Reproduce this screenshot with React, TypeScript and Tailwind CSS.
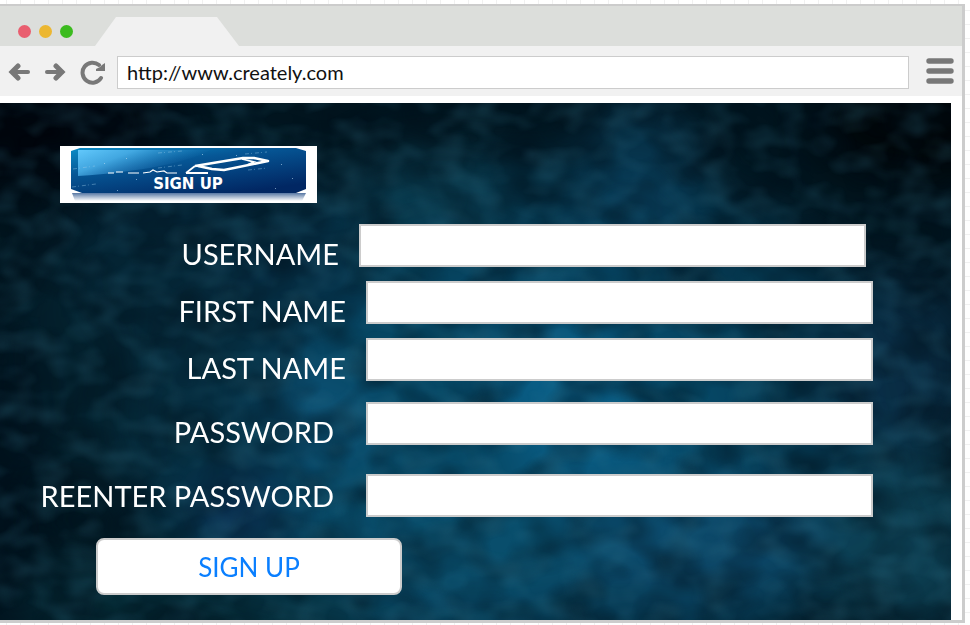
import React from "react";

type Field = {
  id: string;
  label: string;
  type: string;
  row: string;
  labelClass: string;
};

const fields: Field[] = [
  { id: "username", label: "USERNAME", type: "text", row: "items-end mr-[85px]", labelClass: "w-[359px] pr-5" },
  { id: "first-name", label: "FIRST NAME", type: "text", row: "items-end mr-[78px] mt-[14px]", labelClass: "w-[366px] pr-5" },
  { id: "last-name", label: "LAST NAME", type: "text", row: "items-end mr-[78px] mt-[14px]", labelClass: "w-[366px] pr-5" },
  { id: "password", label: "PASSWORD", type: "password", row: "items-end mr-[78px] mt-[21px]", labelClass: "w-[366px] pr-8" },
  { id: "reenter", label: "REENTER PASSWORD", type: "password", row: "items-center mr-[78px] mt-[29px]", labelClass: "w-[366px] pr-8" },
];

// x, y, rx, ry, colour, opacity of the soft patches of light on the backdrop
const patches: [number, number, number, number, string, number][] = [
  [520, 320, 400, 260, "#053a52", 0.9],
  [520, 320, 240, 170, "#07506f", 0.7],
  [560, 270, 80, 60, "#0b6a9a", 0.6],
  [590, 345, 80, 45, "#0b6892", 0.6],
  [280, 275, 50, 45, "#0d5579", 0.65],
  [330, 320, 60, 40, "#125a80", 0.5],
  [440, 450, 180, 70, "#0b516f", 0.7],
  [700, 440, 130, 60, "#0f4f72", 0.7],
  [640, 80, 60, 80, "#0a4260", 0.7],
  [430, 100, 80, 50, "#0c4053", 0.7],
  [210, 160, 150, 100, "#05293d", 0.7],
  [900, 440, 80, 90, "#0d4257", 0.9],
  [900, 260, 80, 90, "#0a2d45", 0.8],
  [130, 260, 140, 130, "#052633", 0.6],
  [240, 410, 40, 30, "#14225a", 0.5],
  [180, 500, 200, 50, "#05303c", 0.7],
  [940, 20, 130, 60, "#000305", 0.9],
  [20, 20, 150, 70, "#00030a", 0.9],
  [0, 380, 40, 180, "#01101b", 0.8],
];

function Backdrop() {
  return (
    <svg
      className="absolute inset-0 h-full w-full"
      viewBox="0 0 951 517"
      preserveAspectRatio="none"
      aria-hidden="true"
    >
      <defs>
        <filter id="soft" x="-50%" y="-50%" width="200%" height="200%" colorInterpolationFilters="sRGB">
          <feGaussianBlur stdDeviation="26" />
        </filter>
        <filter id="shade" x="0" y="0" width="100%" height="100%" colorInterpolationFilters="sRGB">
          <feTurbulence type="fractalNoise" baseFrequency="0.02 0.026" numOctaves={2} seed={7} />
          <feColorMatrix values="0 0 0 0 0  0 0 0 0 0.06  0 0 0 0 0.1  2.4 0 0 0 -0.9" />
        </filter>
        <filter id="glow" x="0" y="0" width="100%" height="100%" colorInterpolationFilters="sRGB">
          <feTurbulence type="fractalNoise" baseFrequency="0.03 0.044" numOctaves={2} seed={21} />
          <feColorMatrix values="0 0 0 0 0.2  0 0 0 0 0.46  0 0 0 0 0.55  0 1.8 0 0 -0.72" />
        </filter>
      </defs>
      <rect width="951" height="517" fill="#02151f" />
      <g filter="url(#soft)">
        {patches.map(([x, y, rx, ry, fill, opacity]) => (
          <ellipse key={`${x}-${y}`} cx={x} cy={y} rx={rx} ry={ry} fill={fill} opacity={opacity} />
        ))}
      </g>
      <rect width="951" height="517" filter="url(#shade)" opacity="0.5" />
      <rect width="951" height="517" filter="url(#glow)" opacity="0.32" />
    </svg>
  );
}

function SignUpLogo() {
  return (
    <svg className="block h-[57px] w-[257px]" viewBox="0 0 257 57" role="img" aria-label="Sign up">
      <defs>
        <linearGradient id="plate" x1="0" y1="0" x2="0.7" y2="1">
          <stop offset="0" stopColor="#0a8cc6" />
          <stop offset="0.4" stopColor="#065796" />
          <stop offset="1" stopColor="#012763" />
        </linearGradient>
        <linearGradient id="shine" x1="0" y1="0" x2="1" y2="0.5">
          <stop offset="0" stopColor="#62c8fb" />
          <stop offset="0.35" stopColor="#4cb1ea" stopOpacity="0.85" />
          <stop offset="0.85" stopColor="#2a7fc0" stopOpacity="0" />
        </linearGradient>
        <linearGradient id="mirror" x1="0" y1="0" x2="0" y2="1">
          <stop offset="0" stopColor="#1f4a85" />
          <stop offset="1" stopColor="#ffffff" />
        </linearGradient>
      </defs>
      <rect width="257" height="57" fill="#ffffff" />
      <path d="M12 47H246L242 55H15Z" fill="url(#mirror)" opacity="0.75" />
      <path d="M20 2H236L246 5V43L236 47H22L11 43V5Z" fill="url(#plate)" />
      <path d="M18 4H150C130 16 80 26 18 30Z" fill="url(#shine)" />
      <g stroke="#9fd0ec" strokeWidth="1" strokeDasharray="4 2 1 3" opacity="0.4" fill="none">
        <path d="M98 7L122 5M98 22L122 19M12 41L36 38M185 8L207 6M13 23L35 20M188 24L208 22" />
      </g>
      <g fill="#bfe0f4" opacity="0.6">
        <path d="M66 12h1v1h-1zM142 8h1v1h-1zM160 34h1v1h-1zM221 18h1v1h-1zM232 32h1v1h-1zM44 17h1v1h-1zM76 33h1v1h-1zM215 42h1v1h-1zM57 44h1v1h-1zM176 9h1v1h-1z" />
      </g>
      <path d="M48 27H54M56 26H63M68 27H79M83 27L90 26L93 24L97 26L104 25L107 27H117" stroke="#ffffff" strokeWidth="1.2" fill="none" />
      <path
        d="M135 20L183 12H194L208 15L164 24L152 23L138 20"
        stroke="#ffffff"
        strokeWidth="2.6"
        strokeLinejoin="round"
        fill="none"
      />
      <path d="M126 27L135 20M126 27H148M182 13L194 16L187 19" stroke="#ffffff" strokeWidth="1.8" fill="none" />
      <text
        x="128"
        y="43"
        textAnchor="middle"
        fill="#ffffff"
        className="font-['DejaVu_Sans',sans-serif] text-[15px] font-bold"
      >
        SIGN UP
      </text>
    </svg>
  );
}

export default function App() {
  return (
    <div className="min-h-screen overflow-hidden bg-white bg-[linear-gradient(to_right,#f1f1f1_1px,transparent_1px),linear-gradient(to_bottom,#f1f1f1_1px,transparent_1px)] bg-[size:14px_14px] bg-[position:6px_10px] pt-1 pr-[5px] font-[Lato,sans-serif]">
      <div className="border-t-2 border-r-[3px] border-b-[3px] border-[#cccccc] bg-white">
        <header>
          <div className="flex h-10 items-end bg-[#dcdedb] pl-[18px]">
            <div className="flex gap-2 pb-2">
              <span className="size-[13px] rounded-full bg-[#e95e6f]" />
              <span className="size-[13px] rounded-full bg-[#ecb731]" />
              <span className="size-[13px] rounded-full bg-[#3bbb1e]" />
            </div>
            <svg className="ml-[22px] h-[29px] w-[144px]" viewBox="0 0 144 29" aria-hidden="true">
              <path d="M0 29L21 0H122L144 29Z" fill="#f1f1f1" />
            </svg>
          </div>
          <div className="flex h-[50px] items-center bg-[#f1f1f1] pt-[3px] pr-2 pl-2">
            <div className="flex gap-[14px] pr-3">
              <button type="button" aria-label="Back">
                <svg className="block h-5 w-[22px]" viewBox="0 0 22 20" fill="none" stroke="#787878" strokeLinecap="round">
                  <path d="M5 9H20" strokeWidth="4" />
                  <path d="M10 3L4 9L10 15" strokeWidth="5" strokeLinejoin="miter" />
                </svg>
              </button>
              <button type="button" aria-label="Forward">
                <svg className="block h-5 w-[22px]" viewBox="0 0 22 20" fill="none" stroke="#787878" strokeLinecap="round">
                  <path d="M3 9H18" strokeWidth="4" />
                  <path d="M12 3L18 9L12 15" strokeWidth="5" strokeLinejoin="miter" />
                </svg>
              </button>
              <button type="button" aria-label="Reload">
                <svg className="block size-[25px]" viewBox="0 0 25 25" fill="none">
                  <path d="M19 5A10 10 0 1 0 21 18" stroke="#787878" strokeWidth="4" strokeLinecap="round" />
                  <path d="M25 3V11H16V9L20 7L22 5Z" fill="#787878" />
                </svg>
              </button>
            </div>
            <input
              type="text"
              aria-label="Address"
              defaultValue="http://www.creately.com"
              className="h-[33px] min-w-0 flex-1 border border-[#cccccc] bg-white px-[9px] pb-[2px] text-[20px] leading-[29px] text-[#111111] outline-none"
            />
            <button type="button" aria-label="Menu" className="ml-[17px] pb-1">
              <svg className="block h-[26px] w-7" viewBox="0 0 28 26" stroke="#787878" strokeWidth="5.4" strokeLinecap="round">
                <path d="M3 3H25M3 13H25M3 23H25" />
              </svg>
            </button>
          </div>
        </header>

        <main className="relative mt-[7px] mr-[11px] bg-[#02151f]">
          <Backdrop />
          <form className="relative pt-[43px] pb-[25px]" onSubmit={(event) => event.preventDefault()}>
            <div className="mb-[21px] ml-[60px]">
              <SignUpLogo />
            </div>
            {fields.map((field) => (
              <div key={field.id} className={`flex ${field.row}`}>
                <label
                  htmlFor={field.id}
                  className={`shrink-0 text-right text-[29px] leading-[26px] whitespace-nowrap text-white ${field.labelClass}`}
                >
                  {field.label}
                </label>
                <input
                  id={field.id}
                  type={field.type}
                  className="h-[43px] min-w-0 flex-1 border-2 border-[#cccccc] bg-white px-2 text-[20px] outline-none"
                />
              </div>
            ))}
            <button
              type="submit"
              className="mt-[21px] ml-24 block h-[57px] w-[306px] rounded-lg border-2 border-[#cccccc] bg-white text-[26px] leading-[26px] text-[#0a7fff]"
            >
              SIGN UP
            </button>
          </form>
        </main>
      </div>
    </div>
  );
}
